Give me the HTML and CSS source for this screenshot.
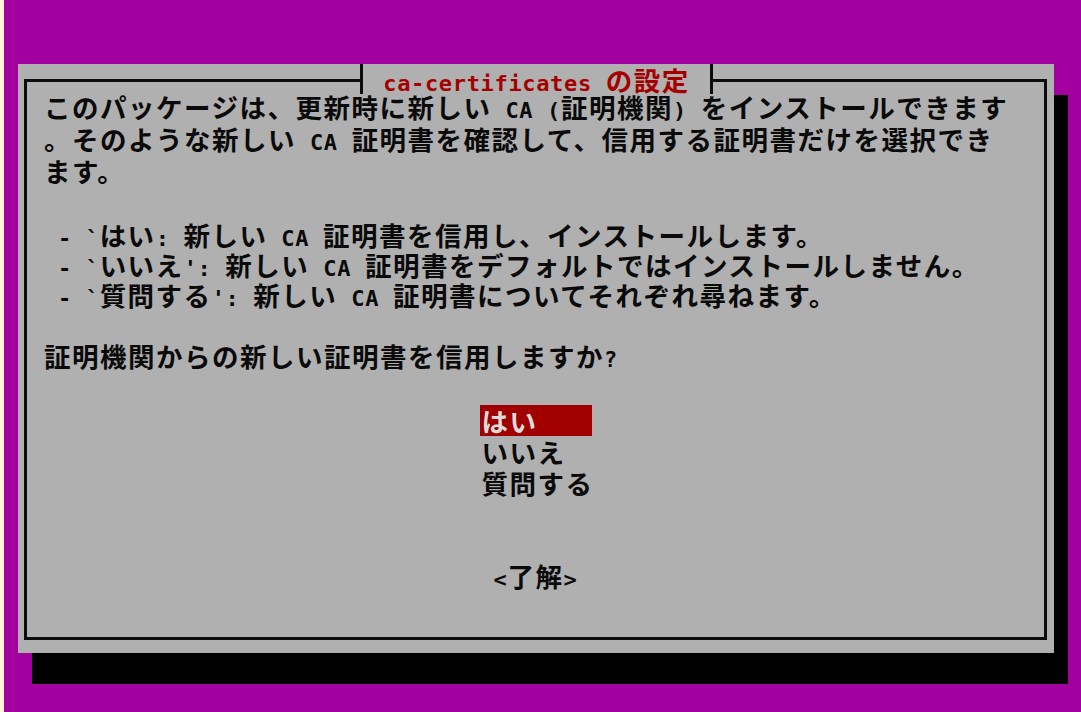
FILE: index.html
```html
<!DOCTYPE html>
<html lang="ja">
<head>
<meta charset="utf-8">
<title>ca-certificates の設定</title>
<link rel="stylesheet" href="styles.css">
</head>
<body>
<div class="screen">
  <div class="dialog">
    <div class="title">
      <span class="bar"></span>
      <span class="title-text"><span class="a">ca-certificates </span>の設定</span>
      <span class="bar"></span>
    </div>
    <div class="frame">
      <div class="para">
        <div class="line">このパッケージは、更新時に新しい<span class="a"> CA (</span>証明機関<span class="a">) </span>をインストールできます</div>
        <div class="line">。そのような新しい<span class="a"> CA </span>証明書を確認して、信用する証明書だけを選択でき</div>
        <div class="line">ます。</div>
      </div>
      <div class="list">
        <div class="line"><span class="a"> - `</span>はい<span class="a">: </span>新しい<span class="a"> CA </span>証明書を信用し、インストールします。</div>
        <div class="line"><span class="a"> - `</span>いいえ<span class="a">': </span>新しい<span class="a"> CA </span>証明書をデフォルトではインストールしません。</div>
        <div class="line"><span class="a"> - `</span>質問する<span class="a">': </span>新しい<span class="a"> CA </span>証明書についてそれぞれ尋ねます。</div>
      </div>
      <div class="question line">証明機関からの新しい証明書を信用しますか<span class="a">?</span></div>
      <div class="menu">
        <div class="item selected">はい</div>
        <div class="item">いいえ</div>
        <div class="item">質問する</div>
      </div>
      <div class="buttons">
        <div class="button"><span class="a">&lt;</span>了解<span class="a">&gt;</span></div>
      </div>
    </div>
  </div>
</div>
</body>
</html>
```

FILE: styles.css
```css
html, body {
  margin: 0;
  padding: 0;
}

body {
  width: 1081px;
  height: 712px;
  overflow: hidden;
  background: #a300a0;
}

.screen {
  box-sizing: border-box;
  width: 1081px;
  height: 712px;
  background: #a300a0;
  border-left: 4px solid #fdf4dc;
  padding-top: 64px;
  padding-left: 14px;
  font-family: "Noto Sans CJK JP", "DejaVu Sans Mono", sans-serif;
  font-weight: bold;
  font-size: 26.5px;
  letter-spacing: 1.5px;
  color: #0a0a0a;
}

.a {
  font-family: "DejaVu Sans Mono", "Liberation Mono", monospace;
  font-size: 22px;
  letter-spacing: 0.66px;
  line-height: 1;
}

.dialog {
  position: relative;
  box-sizing: border-box;
  width: 1036px;
  height: 589px;
  background: #b0b0b0;
  box-shadow: 14px 31px 0 0 #000;
  padding: 15px 7px 13px 6px;
}

.frame {
  box-sizing: border-box;
  height: 100%;
  border: 3px solid #0c0c0c;
  padding: 9px 0 0 17px;
  display: flex;
  flex-direction: column;
}

.title {
  position: absolute;
  left: 342px;
  top: 0;
  height: 30px;
  display: flex;
  background: #b0b0b0;
}

.bar {
  width: 3px;
  height: 30px;
  background: #0c0c0c;
}

.title-text {
  width: 347px;
  height: 31px;
  display: flex;
  justify-content: center;
  align-items: baseline;
  line-height: 31px;
  white-space: pre;
  color: #a40000;
}

.line {
  white-space: pre;
  line-height: 32px;
  height: 32px;
}

.list {
  margin-top: 33px;
}

.list .line {
  line-height: 30px;
  height: 30px;
}

.question {
  margin-top: 30px;
  line-height: 31px;
  height: 31px;
}

.menu {
  margin-top: 34px;
  align-self: center;
  width: 112px;
  margin-right: 17px;
}

.item {
  line-height: 31px;
  height: 31px;
  white-space: pre;
  padding-left: 2px;
}

.selected {
  background: #a00000;
  color: #dcdcdc;
}

.buttons {
  margin-top: 62px;
  display: flex;
  justify-content: center;
  margin-right: 17px;
}

.button {
  line-height: 31px;
  height: 31px;
  white-space: pre;
}
```
